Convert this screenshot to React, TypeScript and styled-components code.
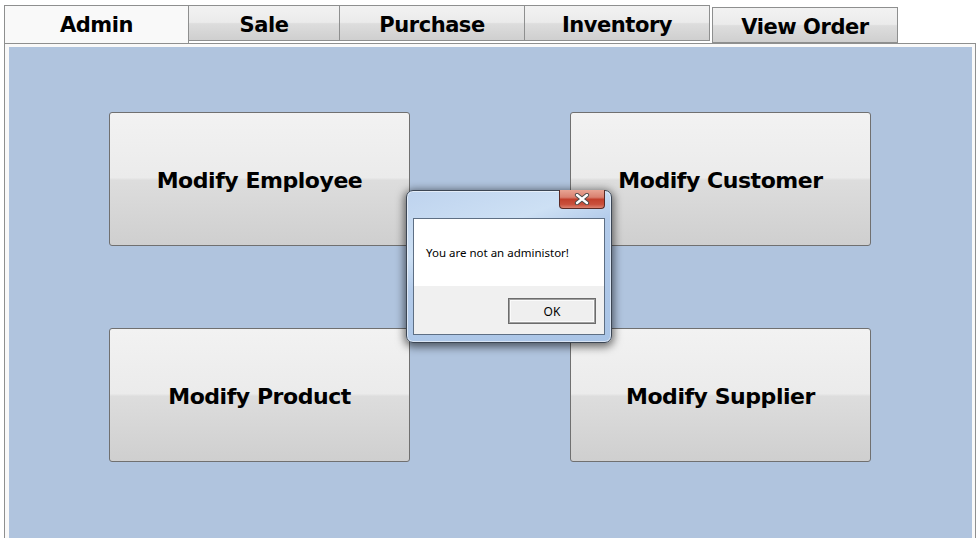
import React from 'react';
import styled, { createGlobalStyle } from 'styled-components';

const GlobalStyle = createGlobalStyle`
  html, body {
    margin: 0;
    padding: 0;
    background: #ffffff;
  }
`;

const Screen = styled.div`
  position: relative;
  width: 979px;
  height: 538px;
  overflow: hidden;
  background: #ffffff;
  font-family: 'DejaVu Sans', sans-serif;
`;

const TabStrip = styled.div`
  display: flex;
  align-items: flex-start;
  height: 38px;
  padding: 5px 0 0 4px;
`;

const Tab = styled.div<{ $width: number; $active?: boolean; $lowered?: boolean }>`
  box-sizing: border-box;
  width: ${({ $width }) => $width}px;
  height: ${({ $active }) => ($active ? 38 : 36)}px;
  margin-top: ${({ $lowered }) => ($lowered ? 2 : 0)}px;
  margin-left: ${({ $lowered }) => ($lowered ? 2 : 0)}px;
  display: flex;
  align-items: center;
  justify-content: center;
  border: 1px solid #8e8f8f;
  border-bottom: ${({ $active }) => ($active ? 'none' : '1px solid #8e8f8f')};
  border-left-width: ${({ $active, $lowered }) => ($active || $lowered ? 1 : 0)}px;
  background: ${({ $active }) =>
    $active ? '#f9f9f9' : 'linear-gradient(to bottom, #f2f2f2 0%, #ebebeb 48%, #dddddd 52%, #cfcfcf 100%)'};
  color: #000;
  font-size: 21px;
  font-weight: bold;
  letter-spacing: -0.45px;
  padding-top: ${({ $active, $lowered }) => ($active ? 0 : $lowered ? 3 : 4)}px;
`;

const Panel = styled.div`
  box-sizing: border-box;
  margin: 0 3px 0 4px;
  height: 500px;
  border: 1px solid #8e8f8f;
  border-bottom: none;
  background: #f9f9f9;
  padding: 3px 3px 0 4px;
`;

const Board = styled.div`
  height: 100%;
  background: #b0c4de;
  display: grid;
  grid-template-columns: 301px 301px;
  grid-auto-rows: 134px;
  column-gap: 160px;
  row-gap: 82px;
  padding: 65px 0 0 100px;
  box-sizing: border-box;
  align-content: start;
`;

const BigButton = styled.button`
  box-sizing: border-box;
  border: 1px solid #707070;
  border-radius: 3px;
  background: linear-gradient(to bottom, #f2f2f2 0%, #ebebeb 49%, #dddddd 51%, #cfcfcf 100%);
  font-family: 'DejaVu Sans', sans-serif;
  font-size: 22px;
  font-weight: bold;
  letter-spacing: -0.45px;
  color: #000;
  padding: 3px 0 0 0;
  cursor: pointer;
`;

const Dialog = styled.div`
  position: absolute;
  left: 406px;
  top: 190px;
  width: 206px;
  height: 153px;
  box-sizing: border-box;
  border: 1px solid #3c4654;
  border-radius: 7px;
  background: linear-gradient(160deg, #bed3ee 0%, #cde0f4 30%, #b3cbea 45%, #a9c4e6 100%);
  box-shadow: 0 2px 9px 2px rgba(0, 0, 0, 0.55), inset 0 0 0 1px rgba(255, 255, 255, 0.55);
  padding: 27px 6px 7px 6px;
`;

const CloseButton = styled.div`
  position: absolute;
  right: 6px;
  top: -1px;
  width: 46px;
  height: 19px;
  box-sizing: border-box;
  border: 1px solid #5a2a25;
  border-top: none;
  border-radius: 0 0 4px 4px;
  background: linear-gradient(to bottom, #e8a493 0%, #d98170 40%, #c2402c 52%, #c9503c 80%, #dc8270 100%);
  display: flex;
  align-items: center;
  justify-content: center;
`;

const Client = styled.div`
  height: 100%;
  box-sizing: border-box;
  border: 1px solid #5e6f84;
  background: #f0f0f0;
  display: flex;
  flex-direction: column;
`;

const MessageArea = styled.div`
  height: 67px;
  background: #ffffff;
  padding: 26px 0 0 12px;
  box-sizing: border-box;
  font-family: 'Noto Sans', sans-serif;
  font-size: 11.5px;
  color: #000;
`;

const ButtonRow = styled.div`
  display: flex;
  justify-content: flex-end;
  padding: 12px 8px 0 0;
`;

const OkButton = styled.button`
  box-sizing: border-box;
  width: 88px;
  height: 26px;
  border: 1px solid #6c6c6c;
  box-shadow: inset 0 0 0 1px #a0a0a0, inset 0 0 0 2px #fbfbfb;
  background: #efefef;
  font-family: 'Noto Sans', sans-serif;
  font-size: 12px;
  color: #000;
  padding: 0;
`;

const tabs = [
  { label: 'Admin', width: 185, active: true },
  { label: 'Sale', width: 151 },
  { label: 'Purchase', width: 185 },
  { label: 'Inventory', width: 185 },
  { label: 'View Order', width: 186, lowered: true },
];

const actions = ['Modify Employee', 'Modify Customer', 'Modify Product', 'Modify Supplier'];

export default function App() {
  return (
    <Screen>
      <GlobalStyle />
      <TabStrip>
        {tabs.map(tab => (
          <Tab key={tab.label} $width={tab.width} $active={tab.active} $lowered={tab.lowered}>
            {tab.label}
          </Tab>
        ))}
      </TabStrip>
      <Panel>
        <Board>
          {actions.map(label => (
            <BigButton key={label}>{label}</BigButton>
          ))}
        </Board>
      </Panel>
      <Dialog>
        <CloseButton>
          <svg width="16" height="12" viewBox="0 0 16 12">
            <path
              d="M3 2 L13 10 M13 2 L3 10"
              stroke="#4a4a4a"
              strokeWidth="4.2"
              strokeLinecap="round"
              fill="none"
            />
            <path
              d="M3 2 L13 10 M13 2 L3 10"
              stroke="#ffffff"
              strokeWidth="2.4"
              strokeLinecap="round"
              fill="none"
            />
          </svg>
        </CloseButton>
        <Client>
          <MessageArea>You are not an administor!</MessageArea>
          <ButtonRow>
            <OkButton>OK</OkButton>
          </ButtonRow>
        </Client>
      </Dialog>
    </Screen>
  );
}
